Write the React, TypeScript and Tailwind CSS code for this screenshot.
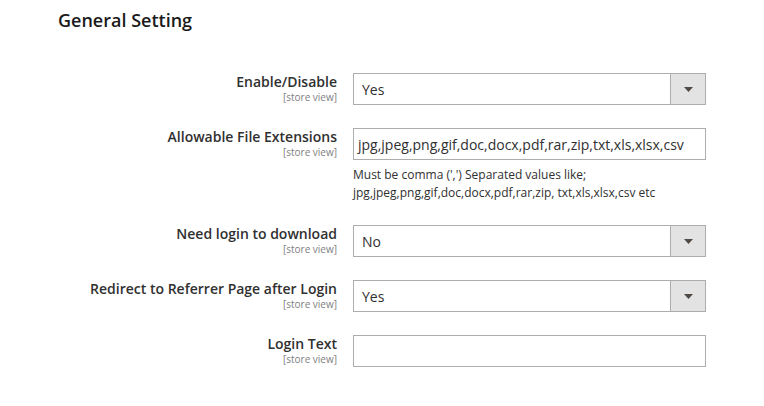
import React from 'react';

type Row = {
    label: string;
    kind: 'select' | 'input';
    value: string;
    note?: string[];
};

const rows: Row[] = [
    { label: 'Enable/Disable', kind: 'select', value: 'Yes' },
    {
        label: 'Allowable File Extensions',
        kind: 'input',
        value: 'jpg,jpeg,png,gif,doc,docx,pdf,rar,zip,txt,xls,xlsx,csv',
        note: [
            "Must be comma (',') Separated values like;",
            'jpg,jpeg,png,gif,doc,docx,pdf,rar,zip, txt,xls,xlsx,csv etc',
        ],
    },
    { label: 'Need login to download', kind: 'select', value: 'No' },
    { label: 'Redirect to Referrer Page after Login', kind: 'select', value: 'Yes' },
    { label: 'Login Text', kind: 'input', value: '' },
];

function SelectBox({ value }: { value: string }) {
    return (
        <div className="flex h-[32px] w-[353px] border border-[#adadad] bg-white">
            <div className="flex-1 flex items-center pl-[8px] text-[14px] text-[#303030]">{value}</div>
            <div className="w-[35px] flex items-center justify-center border-l border-[#adadad] bg-[#e3e3e3]">
                <svg width="9" height="5" viewBox="0 0 9 5">
                    <path d="M0 0 H9 L4.5 5 Z" fill="#514943" />
                </svg>
            </div>
        </div>
    );
}

function InputBox({ value }: { value: string }) {
    return (
        <div className="flex items-center h-[32px] w-[353px] border border-[#adadad] bg-white pl-[4px] text-[14px] text-[#303030] whitespace-nowrap overflow-hidden">
            {value}
        </div>
    );
}

export default function App() {
    return (
        <div className="w-[764px] h-[406px] bg-white font-['Open_Sans',sans-serif] text-[#303030]">
            <h2 className="pl-[58px] pt-[8px] text-[18px] leading-[24px] font-semibold text-[#1a1a1a]">General Setting</h2>

            <div className="mt-[41px] flex flex-col gap-[23px]">
                {rows.map((row) => (
                    <div key={row.label} className="flex items-start">
                        <div className="w-[353px] pr-[16px] text-right">
                            <div className="text-[14px] leading-[18px] font-semibold">{row.label}</div>
                            <div className="text-[10px] leading-[12px] text-[#808080]">[store view]</div>
                        </div>
                        <div>
                            {row.kind === 'select' ? <SelectBox value={row.value} /> : <InputBox value={row.value} />}
                            {row.note && (
                                <div className="mt-[6px] text-[12px] leading-[18px]">
                                    {row.note.map((line) => (
                                        <div key={line}>{line}</div>
                                    ))}
                                </div>
                            )}
                        </div>
                    </div>
                ))}
            </div>
        </div>
    );
}
